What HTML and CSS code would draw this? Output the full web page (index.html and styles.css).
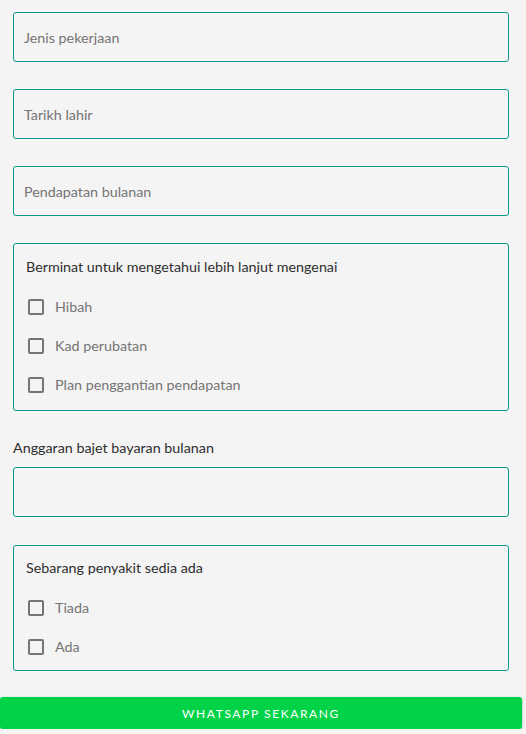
FILE: index.html
```html
<!DOCTYPE html>
<html lang="ms">
<head>
<meta charset="UTF-8">
<title>Borang</title>
<link rel="stylesheet" href="styles.css">
</head>
<body>
<form class="form">
  <div class="field"><input type="text" placeholder="Jenis pekerjaan"></div>
  <div class="field"><input type="text" placeholder="Tarikh lahir"></div>
  <div class="field"><input type="text" placeholder="Pendapatan bulanan"></div>

  <div class="group">
    <p class="group-title">Berminat untuk mengetahui lebih lanjut mengenai</p>
    <label class="check"><span class="box"></span>Hibah</label>
    <label class="check"><span class="box"></span>Kad perubatan</label>
    <label class="check"><span class="box"></span>Plan penggantian pendapatan</label>
  </div>

  <div class="field labelled">
    <label class="field-label">Anggaran bajet bayaran bulanan</label>
    <input type="text">
  </div>

  <div class="group short">
    <p class="group-title">Sebarang penyakit sedia ada</p>
    <label class="check"><span class="box"></span>Tiada</label>
    <label class="check"><span class="box"></span>Ada</label>
  </div>

  <button type="button" class="wa-btn">WhatsApp Sekarang</button>
</form>
</body>
</html>
```

FILE: styles.css
```css
:root {
  --bg: #f4f4f4;
  --line: #0a9a8c;
  --muted: #757575;
  --text: #2e2e2e;
  --green: #00d348;
}
body {
  margin:0;
  background:var(--bg);
  font-family: Lato, "Open Sans", sans-serif;
  font-size:14.3px;
  color:var(--text);
}
.form {
  padding:12px 17px 0 13px;
  display:flex; flex-direction:column;
}
.field { margin-bottom:27px; }
.field input {
  display:block; box-sizing:border-box;
  width:100%; height:50px;
  padding:0 10px;
  border:1px solid var(--line); border-radius:3px;
  background:var(--bg);
  font-family:inherit; font-size:14.3px; color:var(--text);
}
.field input::placeholder { color:var(--muted); }
.field.labelled { margin-bottom:28px; }
.field-label {
  display:block; margin-bottom:11px;
  color:var(--text);
}
.group {
  box-sizing:border-box;
  border:1px solid var(--line); border-radius:3px;
  padding:13px 12px 6px 12px;
  margin-bottom:28px;
}
.group.short { padding-top:12px; padding-bottom:4px; margin-bottom:26px; }
.group-title { margin:0 0 10px 0; line-height:20px; }
.check {
  display:flex; align-items:center;
  height:39px;
  color:var(--muted);
}
.box {
  width:12px; height:12px;
  border:2px solid #757575; border-radius:2px;
  margin:0 11px 0 2px;
}
.wa-btn {
  margin-left:-13px; width:522px; height:32px;
  border:none; border-radius:3px;
  background:var(--green); color:#fff;
  font-family:inherit; font-size:12px; letter-spacing:1.6px;
  text-transform:uppercase;
  box-shadow:0 1px 3px rgba(0,0,0,0.3);
}
```
